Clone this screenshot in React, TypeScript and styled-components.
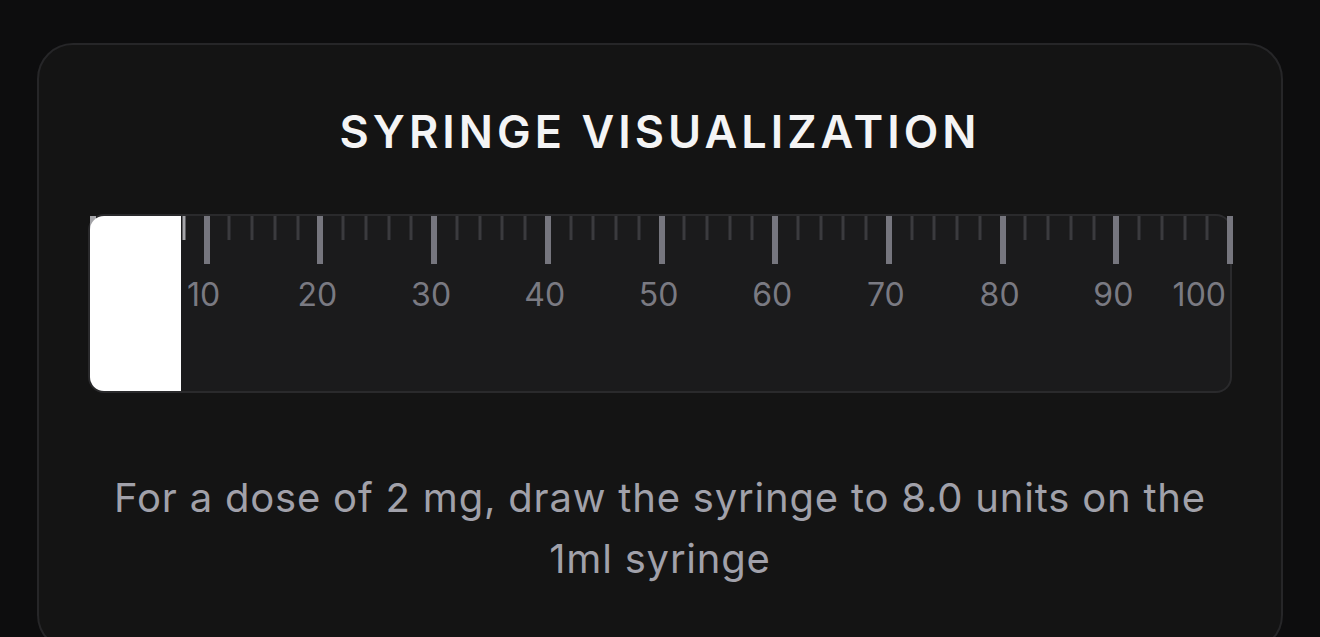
import React from "react";
import styled, { createGlobalStyle } from "styled-components";

const GlobalStyle = createGlobalStyle`
  html, body {
    margin: 0;
    padding: 0;
    background: #0d0d0e;
    font-family: Inter, "Noto Sans", sans-serif;
  }
`;

const DOSE_UNITS = 8;
const MAX_UNITS = 100;

const ticks = Array.from({ length: MAX_UNITS / 2 + 1 }, (_, i) => i * 2);
const labels = [10, 20, 30, 40, 50, 60, 70, 80, 90, 100];

const App: React.FC = () => {
  return (
    <Page>
      <GlobalStyle />
      <Card>
        <Title>Syringe Visualization</Title>
        <Barrel>
          <Fill style={{ width: `${(DOSE_UNITS / MAX_UNITS) * 100}%` }} />
          <Scale>
            {ticks.map((u) => (
              <Tick
                key={u}
                $major={u % 10 === 0}
                $active={u <= DOSE_UNITS}
                style={{ left: `${u}%` }}
              />
            ))}
            {labels.map((u) => (
              <Label key={u} $last={u === MAX_UNITS} style={{ left: `${u}%` }}>
                {u}
              </Label>
            ))}
          </Scale>
        </Barrel>
        <Caption>
          For a dose of 2 mg, draw the syringe to 8.0 units on the 1ml syringe
        </Caption>
      </Card>
    </Page>
  );
};

export default App;

const Page = styled.div`
  padding: 43px 37px 0;
  min-height: 637px;
  box-sizing: border-box;
`;

const Card = styled.div`
  background: #141414;
  border: 2px solid #262628;
  border-radius: 36px;
  padding: 60px 49px 60px;
  display: flex;
  flex-direction: column;
  align-items: stretch;
`;

const Title = styled.h2`
  margin: 0;
  text-align: center;
  color: #f4f4f5;
  font-size: 45px;
  font-weight: 600;
  letter-spacing: 0.09em;
  line-height: 53px;
  text-transform: uppercase;
`;

const Barrel = styled.div`
  position: relative;
  margin-top: 56px;
  height: 175px;
  background: #1b1b1c;
  border: 2px solid #2a2a2c;
  border-radius: 16px;
`;

const Fill = styled.div`
  position: relative;
  z-index: 2;
  height: 100%;
  background: #ffffff;
  border-radius: 14px 0 0 14px;
`;

const Scale = styled.div`
  position: absolute;
  top: 0;
  left: 3px;
  right: 0;
  bottom: 0;
`;

interface TickProps {
  $major: boolean;
  $active: boolean;
}

const Tick = styled.div<TickProps>`
  position: absolute;
  top: 0;
  transform: translateX(-50%);
  width: ${(p) => (p.$major ? "6px" : "3px")};
  height: ${(p) => (p.$major ? "48px" : "24px")};
  background: ${(p) =>
    p.$active ? "#a4a4a8" : p.$major ? "#76767e" : "#3b3b3e"};
  z-index: ${(p) => (p.$active ? 1 : 3)};
`;

const Label = styled.span<{ $last: boolean }>`
  position: absolute;
  top: 62px;
  transform: ${(p) =>
    p.$last ? "translateX(calc(-100% - 4px))" : "translateX(calc(-50% - 3px))"};
  color: #7a7a82;
  font-size: 32px;
  line-height: 34px;
  z-index: 3;
`;

const Caption = styled.p`
  margin: 74px 0 0;
  text-align: center;
  color: #a1a1aa;
  font-size: 40px;
  letter-spacing: 0.02em;
  line-height: 61px;
`;
